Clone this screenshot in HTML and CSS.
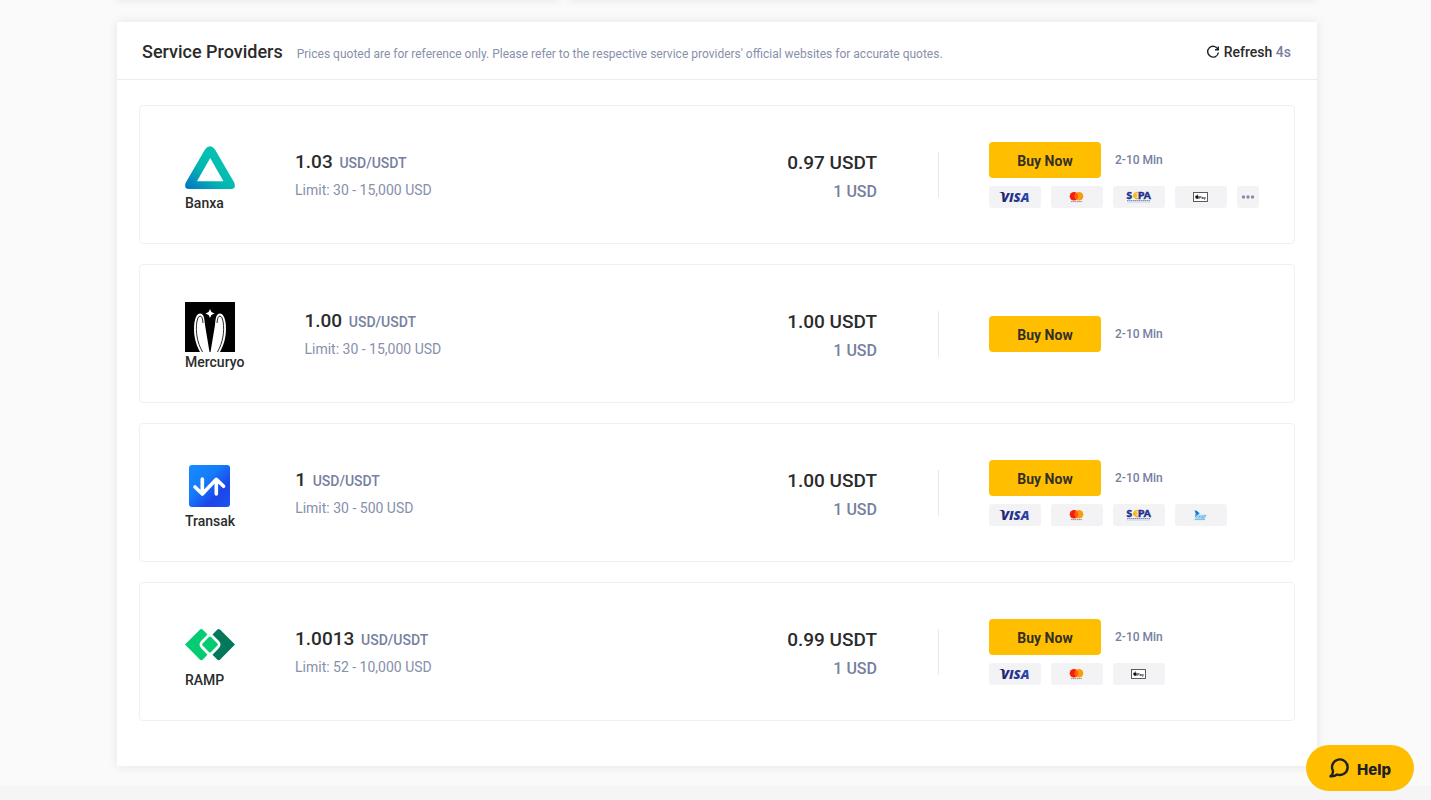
FILE: index.html
```html
<!DOCTYPE html>
<html lang="en">
<head>
<meta charset="utf-8">
<title>Service Providers</title>
<link rel="stylesheet" href="styles.css">
</head>
<body>
<svg class="sprite" aria-hidden="true">
  <defs>
    <linearGradient id="visa-fill" x1="0" x2="1"><stop offset="0" stop-color="#20246e"/><stop offset="1" stop-color="#2f45ae"/></linearGradient>
    <symbol id="visa" viewBox="0 0 52 22">
      <text class="visa-text" x="12" y="16" fill="url(#visa-fill)">VISA</text>
      <path d="M10 6h4.500l1.500 4Q14 7 10 6z" fill="#20246e"/>
    </symbol>
    <symbol id="mastercard" viewBox="0 0 52 22">
      <circle cx="23" cy="10.300" r="4.300" fill="#f51d0b"/>
      <circle cx="28" cy="10.300" r="4.300" fill="#fb9c0c"/>
      <path d="M25.500 6.800a4.300 4.300 0 0 1 0 7a4.300 4.300 0 0 1 0-7z" fill="#fc5f09"/>
      <path d="M20 15.600h11" stroke="#8b6d72" stroke-width=".8" stroke-dasharray="1.500 .4"/>
    </symbol>
    <symbol id="sepa" viewBox="0 0 52 22">
      <text class="sepa-text" x="13.500" y="13" fill="#20308a" stroke="#20308a" stroke-width=".5">S</text>
      <path d="M25.500 7a3 3 0 1 0 0 5.200M20 8.900h4.500M20 10.400h4" fill="none" stroke="#fbb916" stroke-width="1.500"/>
      <text class="sepa-text" x="25" y="13" fill="#20308a" stroke="#20308a" stroke-width=".5">PA</text>
      <path d="M14 14.700h23" stroke="#5a77b8" stroke-width="1" stroke-dasharray="1.500 .5"/>
      <path d="M14 16.300h23" stroke="#c9d2e8" stroke-width=".7"/>
    </symbol>
    <symbol id="applepay" viewBox="0 0 52 22">
      <rect x="18.500" y="6.500" width="14" height="9" fill="#fff" stroke="#4c4c4c" stroke-width=".9"/>
      <path d="M22.200 9.800c.4-.2 1.300-.2 1.600.3-.7.500-.5 1.300.1 1.600-.4 1.200-1 1.200-1.700 1-.7.300-1.900 0-1.900-1.600s1.200-1.700 1.900-1.300z M22 9.500c0-.7.500-1.200 1.100-1.300 0 .7-.5 1.300-1.100 1.300z" fill="#111"/>
      <text class="pay-text" x="24" y="12.500">Pay</text>
    </symbol>
    <symbol id="pisp" viewBox="0 0 52 22">
      <path d="M19.500 6.200Q23 7 24 10l-4.500 3.500q1.500-2.500 1-4z" fill="#1b8df0"/>
      <path d="M20.500 6l4.500 3.800-3-.3z" fill="#185fb5"/>
      <path d="M20 15.300l3-4.500h8.500l-1.500 4.500z" fill="#a4d8f3"/>
      <path d="M20.500 14.500l2.500-3M24 14l1-2.500M27.500 11.500l-1 2.500h2M31 11.500h-1.500l-1 2.500" stroke="#62aee2" stroke-width=".7" fill="none"/>
      <path d="M19.500 15.600h10.500" stroke="#5ba1d7" stroke-width=".7"/>
    </symbol>
  </defs>
</svg>

<main class="page">
  <div class="summary" aria-hidden="true">
    <div class="summary-card"></div>
    <div class="summary-card"></div>
  </div>

  <section class="panel">
    <header class="panel-header">
      <h1 class="title">Service Providers</h1>
      <p class="note">Prices quoted are for reference only. Please refer to the respective service providers' official websites for accurate quotes.</p>
      <button class="refresh" type="button">
        <svg class="refresh-icon" viewBox="0 0 14 14" fill="none" stroke="#1e2026" stroke-width="1.400"><path d="M12 4.500A5.400 5.400 0 1 0 12.400 7.500"/><path d="M12.300 1.500v3.300H9"/></svg>
        <span>Refresh <span class="countdown">4s</span></span>
      </button>
    </header>

    <ul class="providers">
      <li class="provider">
        <div class="brand">
          <svg class="logo" viewBox="0 0 50 50" role="img" aria-label="Banxa logo">
            <defs><linearGradient id="banxa-fill" x1="0" y1="1" x2=".6" y2=".4"><stop offset="0" stop-color="#0272c0"/><stop offset=".25" stop-color="#068bbe"/><stop offset=".65" stop-color="#02b4b2"/><stop offset="1" stop-color="#05bfb0"/></linearGradient></defs>
            <path fill="url(#banxa-fill)" fill-rule="evenodd" d="M20 6.500Q25 0 30 6.500L49.200 39.500Q51.500 45.900 46 46H4Q-1.500 45.900.8 39.500zM25.200 15L12 38.300h26.500z"/>
          </svg>
          <span class="name">Banxa</span>
        </div>
        <div class="quote">
          <p class="rate">1.03 <span class="pair">USD/USDT</span></p>
          <p class="limit">Limit: 30 - 15,000 USD</p>
        </div>
        <div class="amounts">
          <p class="receive">0.97 USDT</p>
          <p class="pay">1 USD</p>
        </div>
        <div class="divider"></div>
        <div class="purchase">
          <div class="buy-row"><button class="buy" type="button">Buy Now</button><span class="time">2-10 Min</span></div>
          <div class="methods">
            <svg class="method" role="img" aria-label="Visa"><use href="#visa"/></svg>
            <svg class="method" role="img" aria-label="Mastercard"><use href="#mastercard"/></svg>
            <svg class="method" role="img" aria-label="SEPA"><use href="#sepa"/></svg>
            <svg class="method" role="img" aria-label="Apple Pay"><use href="#applepay"/></svg>
            <button class="more" type="button" aria-label="More payment methods"><svg class="dots" viewBox="0 0 12 4" fill="#7e87a8"><rect width="3" height="3" y=".5" rx="1"/><rect width="3" height="3" x="4.500" y=".5" rx="1"/><rect width="3" height="3" x="9" y=".5" rx="1"/></svg></button>
          </div>
        </div>
      </li>

      <li class="provider">
        <div class="brand">
          <svg class="logo" viewBox="0 0 50 50" role="img" aria-label="Mercuryo logo">
            <rect width="50" height="50" fill="#000"/>
            <path d="M25 7l1.400 3.100 3.100 1.400-3.100 1.400L25 16l-1.400-3.100-3.100-1.400 3.100-1.400z" fill="#fff"/>
            <g id="wing">
              <path d="M15 50C10 41 8 31 9.500 20Q11 11.500 15 11.500C19 11.500 19.500 17 20 23L24.500 50z" fill="#fff"/>
              <path d="M17.500 50C12 40 10.500 30 11.800 20Q12.800 14 15 14Q17.500 14 18 21" fill="none" stroke="#111" stroke-width=".9"/>
            </g>
            <use href="#wing" transform="matrix(-1 0 0 1 50 0)"/>
          </svg>
          <span class="name">Mercuryo</span>
        </div>
        <div class="quote">
          <p class="rate">1.00 <span class="pair">USD/USDT</span></p>
          <p class="limit">Limit: 30 - 15,000 USD</p>
        </div>
        <div class="amounts">
          <p class="receive">1.00 USDT</p>
          <p class="pay">1 USD</p>
        </div>
        <div class="divider"></div>
        <div class="purchase">
          <div class="buy-row"><button class="buy" type="button">Buy Now</button><span class="time">2-10 Min</span></div>
        </div>
      </li>

      <li class="provider">
        <div class="brand">
          <svg class="logo" viewBox="0 0 50 50" role="img" aria-label="Transak logo">
            <defs><linearGradient id="transak-fill" x1="0" y1="0" x2="1" y2="1"><stop offset="0" stop-color="#168cff"/><stop offset=".4" stop-color="#147bfa"/><stop offset=".7" stop-color="#1c45ea"/><stop offset="1" stop-color="#1a55ee"/></linearGradient></defs>
            <rect x="4" y="4" width="41" height="42" rx="3" fill="url(#transak-fill)"/>
            <path d="M17.300 18v14.500M10 26l7.300 7L31.300 18.300l7.300 7M31.300 19v14" fill="none" stroke="#fff" stroke-width="3.600" stroke-linecap="round" stroke-linejoin="round"/>
          </svg>
          <span class="name">Transak</span>
        </div>
        <div class="quote">
          <p class="rate">1 <span class="pair">USD/USDT</span></p>
          <p class="limit">Limit: 30 - 500 USD</p>
        </div>
        <div class="amounts">
          <p class="receive">1.00 USDT</p>
          <p class="pay">1 USD</p>
        </div>
        <div class="divider"></div>
        <div class="purchase">
          <div class="buy-row"><button class="buy" type="button">Buy Now</button><span class="time">2-10 Min</span></div>
          <div class="methods">
            <svg class="method" role="img" aria-label="Visa"><use href="#visa"/></svg>
            <svg class="method" role="img" aria-label="Mastercard"><use href="#mastercard"/></svg>
            <svg class="method" role="img" aria-label="SEPA"><use href="#sepa"/></svg>
            <svg class="method" role="img" aria-label="Bank payment"><use href="#pisp"/></svg>
          </div>
        </div>
      </li>

      <li class="provider">
        <div class="brand">
          <svg class="logo" viewBox="0 0 50 50" role="img" aria-label="Ramp logo">
            <path d="M0 24.600L14.800 9.800Q16.300 8.300 17.800 9.800L22.500 14.500 16 21Q13 24.500 16 28L22.500 34.700 17.800 39.400Q16.300 40.900 14.800 39.400z" fill="#05cb73"/>
            <path d="M50 24.600L35.200 9.800Q33.700 8.300 32.200 9.800L27.500 14.500 34 21Q37 24.500 34 28L27.500 34.700 32.200 39.400Q33.700 40.900 35.200 39.400z" fill="#04785b"/>
            <rect x="19" y="18.500" width="12" height="12" rx="1.500" transform="rotate(45 25 24.500)" fill="#05cb73"/>
          </svg>
          <span class="name">RAMP</span>
        </div>
        <div class="quote">
          <p class="rate">1.0013 <span class="pair">USD/USDT</span></p>
          <p class="limit">Limit: 52 - 10,000 USD</p>
        </div>
        <div class="amounts">
          <p class="receive">0.99 USDT</p>
          <p class="pay">1 USD</p>
        </div>
        <div class="divider"></div>
        <div class="purchase">
          <div class="buy-row"><button class="buy" type="button">Buy Now</button><span class="time">2-10 Min</span></div>
          <div class="methods">
            <svg class="method" role="img" aria-label="Visa"><use href="#visa"/></svg>
            <svg class="method" role="img" aria-label="Mastercard"><use href="#mastercard"/></svg>
            <svg class="method" role="img" aria-label="Apple Pay"><use href="#applepay"/></svg>
          </div>
        </div>
      </li>
    </ul>
  </section>
</main>
<footer class="footer"></footer>

<button class="help" type="button">
  <svg class="help-icon" viewBox="0 0 20 20" fill="none" stroke="#1e2026" stroke-width="2.400" stroke-linejoin="round"><path d="M4 13A7.800 7.800 0 1 1 8 16.500Q5.500 18.700 1.500 18.300Q4.300 16 4 13z"/></svg>
  Help
</button>
</body>
</html>
```
FILE: styles.css
```css
* {
  box-sizing: border-box;
}

body {
  margin: 0;
  background: #fafafa;
  color: #2b2b2b;
  font-family: Roboto, "Liberation Sans", sans-serif;
}

h1, p, ul {
  margin: 0;
  padding: 0;
}

button {
  border: 0;
  padding: 0;
  background: none;
  color: inherit;
  font: inherit;
  cursor: pointer;
}

.sprite {
  display: block;
  width: 0;
  height: 0;
}

.page {
  padding: 0 114px 20px 117px;
}

.summary {
  display: grid;
  grid-template-columns: 443px 1fr;
  gap: 10px;
  margin-top: -20px;
  margin-bottom: 22px;
}

.summary-card {
  height: 20px;
}

.summary-card,
.panel {
  background: #fff;
  box-shadow: 0 0 10px rgba(0, 0, 0, 0.09);
}

.panel-header {
  display: flex;
  align-items: center;
  min-height: 58px;
  padding: 0 26px 0 25px;
  border-bottom: 1px solid #ececec;
}

.title {
  padding-top: 2px;
  font-size: 18px;
  font-weight: 500;
  line-height: 24px;
}

.note {
  margin-left: 14px;
  padding-top: 6px;
  color: #8790ab;
  font-size: 12px;
  line-height: 20px;
}

.refresh {
  display: flex;
  align-items: center;
  gap: 4px;
  margin-left: auto;
  padding-top: 2px;
  font-size: 14px;
  font-weight: 500;
  line-height: 20px;
}

.refresh-icon {
  width: 14px;
  height: 14px;
}

.countdown {
  color: #76809f;
}

.providers {
  display: grid;
  gap: 20px;
  padding: 25px 22px 45px;
  list-style: none;
}

.provider {
  display: flex;
  align-items: center;
  min-height: 139px;
  padding-left: 45px;
  border: 1px solid #eef0f2;
  border-radius: 4px;
}

.brand {
  display: flex;
  flex-direction: column;
  min-width: 50px;
  margin-right: 60px;
  padding-top: 6px;
}

.logo {
  display: block;
  width: 50px;
  height: 50px;
}

.name {
  font-size: 14px;
  font-weight: 500;
  line-height: 20px;
}

.quote {
  flex: 1;
  padding-top: 2px;
}

.rate,
.receive {
  font-size: 19px;
  font-weight: 500;
  line-height: 28px;
}

.pair {
  margin-left: 2px;
  color: #76809f;
  font-size: 14px;
}

.limit {
  color: #8790ab;
  font-size: 14px;
  line-height: 26px;
}

.amounts {
  padding-top: 6px;
  text-align: right;
}

.pay {
  color: #76809f;
  font-size: 16px;
  font-weight: 500;
  line-height: 30px;
}

.divider {
  width: 1px;
  height: 46px;
  margin: 0 50px 0 61px;
  background: #e8e9ec;
}

.purchase {
  display: flex;
  flex-direction: column;
  gap: 8px;
  width: 305px;
}

.buy-row {
  display: flex;
  align-items: center;
  gap: 14px;
}

.buy {
  width: 112px;
  height: 36px;
  padding-top: 2px;
  border-radius: 4px;
  background: #ffbf00;
  color: #332f26;
  font-size: 14px;
  font-weight: 700;
}

.time {
  color: #76809f;
  font-size: 12px;
  font-weight: 500;
}

.methods {
  display: flex;
  gap: 10px;
}

.method,
.more {
  height: 22px;
  border-radius: 3px;
  background: #f3f3f6;
}

.method {
  width: 52px;
}

.more {
  display: grid;
  place-items: center;
  width: 22px;
}

.dots {
  width: 12px;
  height: 4px;
}

.visa-text {
  font: italic 900 13px "Open Sans", sans-serif;
}

.sepa-text {
  font: 900 10px Lato, sans-serif;
}

.pay-text {
  font: 500 4px Roboto, sans-serif;
}

.footer {
  height: 14px;
  background: #f5f5f5;
}

.help {
  position: fixed;
  right: 17px;
  bottom: 9px;
  display: flex;
  align-items: center;
  justify-content: center;
  gap: 8px;
  width: 108px;
  height: 46px;
  padding-top: 2px;
  border-radius: 23px;
  background: #ffbf00;
  color: #1e2026;
  font: 800 15px Inter, sans-serif;
}

.help-icon {
  width: 20px;
  height: 20px;
  margin-bottom: 2px;
}
```
